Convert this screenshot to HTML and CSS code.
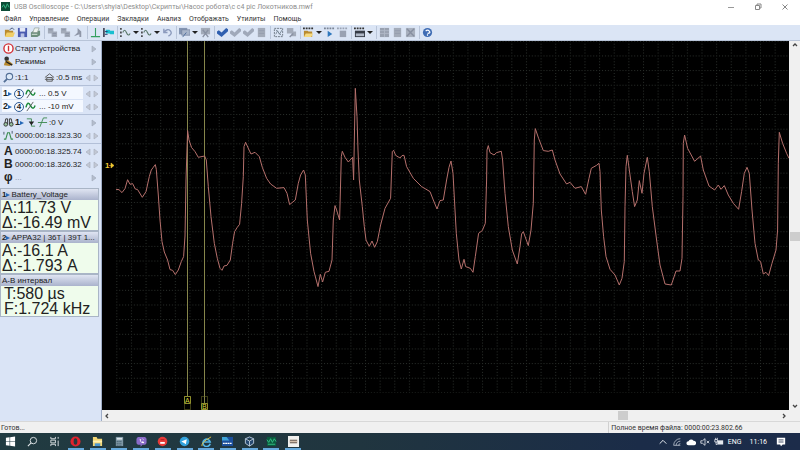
FILE: index.html
```html
<!DOCTYPE html>
<html lang="ru">
<head>
<meta charset="utf-8">
<title>USB Oscilloscope</title>
<link rel="stylesheet" href="styles.css">
</head>
<body>
<svg class="defs" aria-hidden="true">
  <symbol id="copy" viewBox="0 0 12 12"><path d="M1 1h6v6H1zM5 5h6v6H5z" fill="#a3abb9"/><path d="M2 3h4M6 7h4M6 9h4" stroke="#8a93a5"/></symbol>
  <symbol id="check" viewBox="0 0 12 12"><path d="M0 5l2-1.500 3 2.500 5-5 2 1.500v2L5 11 0 7z" fill="currentColor"/></symbol>
  <symbol id="sheet" viewBox="0 0 12 12"><path d="M2 1h8v10H2z" fill="#a3abb9"/><path d="M3 4h6M3 7h6" stroke="#959dae"/></symbol>
  <symbol id="wave" viewBox="0 0 12 12"><path d="M1 1v2M1 5v2M1 9v2" stroke="#222" stroke-width="1.5"/><path d="M3 6q2-5 4 0t4 1" fill="none" stroke="#587668" stroke-width="1.2"/></symbol>
  <symbol id="sine" viewBox="0 0 12 12"><path d="M1 7q2-8 5-2t5 0" fill="none" stroke="#1d8a3c" stroke-width="1.6"/><path d="M2 11l7-10" stroke="#555"/></symbol>
  <symbol id="spin" viewBox="0 0 14 8"><path d="M5 1v6L1 4zM9 1v6l4-3z" fill="#c2c8d4" stroke="#a6adba" stroke-width=".6"/></symbol>
  <symbol id="next" viewBox="0 0 14 8"><path d="M7 1v6l4-3z" fill="#b4bdcc" stroke="#9da7b8" stroke-width=".6"/></symbol>
  <symbol id="chan" viewBox="0 0 5 8"><path d="M0 2l4 2-4 2z" fill="#2668b8"/></symbol>
</svg>

<header class="titlebar">
  <svg class="app" viewBox="0 0 10 10"><path d="M0 0h10v10H0z" fill="#0c4c37"/><path d="M1 6l2-3 2 4 2-5 2 4" fill="none" stroke="#39c08a"/></svg>
  <h1>USB Oscilloscope - C:\Users\shyia\Desktop\Скрипты\Насос робота\с с4 pic Локотников.mwf</h1>
  <div class="winbtns">
    <button aria-label="Свернуть"><svg viewBox="0 0 8 8"><path d="M1 4.500h6" stroke="#999"/></svg></button>
    <button aria-label="Развернуть"><svg viewBox="0 0 8 8"><path d="M1.500 2.500h4v4h-4zM3 2.500V1h4v4H5.500" fill="none" stroke="#888"/></svg></button>
    <button aria-label="Закрыть"><svg viewBox="0 0 8 8"><path d="M1.500 1.500l5 5M6.500 1.500l-5 5" stroke="#888"/></svg></button>
  </div>
</header>

<nav class="menu">
  <button>Файл</button><button>Управление</button><button>Операции</button><button>Закладки</button><button>Анализ</button><button>Отображать</button><button>Утилиты</button><button>Помощь</button>
</nav>

<div class="toolbar" role="toolbar">
  <button aria-label="Открыть"><svg viewBox="0 0 12 12"><path d="M1 3h4l1 1h4v6H1z" fill="#b98b30"/><path d="M3 6h9l-2 5H1z" fill="#f1cf68"/><path d="M6 3l3-2 2 2" fill="none" stroke="#457"/></svg></button>
  <button aria-label="Сохранить"><svg viewBox="0 0 12 12"><path d="M1 1h10v10H1z" fill="#4a5bb0"/><path d="M3 1h6v4H3z" fill="#e4e9f8"/><path d="M4 7h4v4H4z" fill="#b8c2e6"/></svg></button>
  <button aria-label="Печать"><svg viewBox="0 0 12 12"><path d="M1 6l3-2h7v5l-3 2H1z" fill="#6d8f7d"/><path d="M5 1h5L8 6H3z" fill="#eef3ee" stroke="#7d8c86" stroke-width=".6"/><path d="M2 8h6" stroke="#dce8df"/></svg></button>
  <i></i>
  <button aria-label="Копировать"><svg><use href="#copy"/></svg></button>
  <button aria-label="Вставить"><svg><use href="#copy"/></svg></button>
  <button aria-label="Маркер"><svg viewBox="0 0 12 12"><path d="M5 1l4 4v6H7V8l-6 2 4-4z" fill="#8f97a8"/></svg></button>
  <i></i>
  <button aria-label="Уровень"><svg viewBox="0 0 12 12"><path d="M6 1v9M1 10.500h10" stroke="#35a060" stroke-width="1.200"/></svg></button>
  <button aria-label="Каналы"><svg viewBox="0 0 12 12"><path d="M1 1v10" stroke="#223" stroke-width="1.500"/><path d="M3 3h4l1 1h4v4H8L7 7H3z" fill="#19bfd0"/><path d="M2 5h3M2 8h3" stroke="#236"/></svg></button>
  <i></i>
  <button aria-label="Сигнал 1"><svg><use href="#wave"/></svg></button><button class="drop" aria-label="Список сигнала 1"></button>
  <button aria-label="Сигнал 2"><svg><use href="#wave"/></svg></button><button class="drop" aria-label="Список сигнала 2"></button>
  <button aria-label="Отменить"><svg viewBox="0 0 12 12"><path d="M2 2v4h4M2 6q4-5 7-2t-2 6" fill="none" stroke="#8c9bbd" stroke-width="1.500"/></svg></button>
  <i></i>
  <button aria-label="Экран"><svg viewBox="0 0 12 12"><path d="M0 1h9v7H0z" fill="#8495b2"/><path d="M3 3h9v6H3z" fill="#a8b5ca" stroke="#71809c" stroke-width=".7"/><path d="M4 11l4-5" stroke="#4d6d9c"/></svg></button><button class="drop" aria-label="Список экрана"></button>
  <button aria-label="Убрать экран"><svg viewBox="0 0 12 12"><path d="M1 1h10v7H1z" fill="#a3abb9"/><path d="M3 3l6 8M9 3l-6 8" stroke="#8a92a3" stroke-width="1.500"/></svg></button>
  <i></i>
  <button class="blue" aria-label="Принять"><svg><use href="#check"/></svg></button>
  <button class="grey" aria-label="Принять далее"><svg><use href="#check"/></svg></button>
  <button class="grey" aria-label="Принять всё"><svg><use href="#check"/></svg></button>
  <button aria-label="Лист"><svg><use href="#sheet"/></svg></button>
  <i></i>
  <button aria-label="Масштаб"><svg viewBox="0 0 12 12"><path d="M1.500 1.500h9v9h-9z" fill="none" stroke="#68737f" stroke-dasharray="2 1"/><path d="M3 8l2-4 2 4 3-5M3 3l6 6" fill="none" stroke="#7c8a98"/></svg></button>
  <button aria-label="Фрагмент"><svg viewBox="0 0 12 12"><path d="M1 1h7v6H1zM6 5h5v5H6z" fill="#a3abb9"/><path d="M4 11l4-4" stroke="#8a92a3" stroke-width="1.500"/></svg></button>
  <i></i>
  <button aria-label="Открыть запись"><svg viewBox="0 0 12 12"><path d="M0 1.500h12" stroke="#333" stroke-width="2" stroke-dasharray="2 1"/><path d="M1 4h4l1 1h4v6H1z" fill="#b98b30"/><path d="M3 7h8l-2 4H1z" fill="#f6da80"/></svg></button><button class="drop" aria-label="Список записей"></button>
  <button aria-label="Пуск записи"><svg viewBox="0 0 12 12"><path d="M0 1.500h12" stroke="#7a8495" stroke-width="2" stroke-dasharray="2 1"/><path d="M4 4l5 3.500L4 11z" fill="#2f78bd"/></svg></button>
  <button aria-label="Стоп записи"><svg viewBox="0 0 12 12"><path d="M0 1.500h12" stroke="#9aa3b4" stroke-width="2" stroke-dasharray="2 1"/><path d="M3 4h7v7H3z" fill="#9aa2b2"/></svg></button>
  <i></i>
  <button aria-label="Панель"><svg viewBox="0 0 12 12"><path d="M0 1.500h12" stroke="#333" stroke-width="2" stroke-dasharray="2 1"/><path d="M1 4h11v7H1z" fill="#353b46"/><path d="M2 7h9v3H2z" fill="#aeb7c6"/></svg></button><button class="drop" aria-label="Список панелей"></button>
  <i></i>
  <button aria-label="Таблица"><svg viewBox="0 0 12 12"><path d="M1 1h10v10H1z" fill="#99a1b0"/><path d="M1 4h10M1 7h10M6 1v10" stroke="#b0b8c6"/></svg></button>
  <button aria-label="Отчёт"><svg><use href="#sheet"/></svg></button>
  <button aria-label="Удалить"><svg viewBox="0 0 12 12"><path d="M1 1h10v10H1z" fill="#a8b0be"/><path d="M2 2l8 8M10 2l-8 8" stroke="#878fa0" stroke-width="1.500"/></svg></button>
  <i></i>
  <button aria-label="Справка"><svg viewBox="0 0 12 12"><circle cx="6" cy="6" r="5" fill="#3f6cb4"/><path d="M4 4.500q2-2 4 0T6 7M6 8v1.500" fill="none" stroke="#fff" stroke-width="1.300"/></svg></button>
</div>

<main>
  <aside>
    <section>
      <button class="row"><svg class="ic" viewBox="0 0 12 12"><circle cx="6" cy="6" r="5" fill="#fff" stroke="#d22e35" stroke-width="1.500"/><path d="M6 3v6" stroke="#d22e35" stroke-width="1.500"/></svg><span>Старт устройства</span><svg class="end"><use href="#next"/></svg></button>
      <button class="row"><svg class="ic" viewBox="0 0 12 12"><circle cx="4" cy="3" r="2.500" fill="#333"/><path d="M1 10q1-6 5-5l5 4-4 2z" fill="#b6892f"/><path d="M3 6l7 4" stroke="#222" stroke-width="1.500"/></svg><span>Режимы</span><svg class="end"><use href="#next"/></svg></button>
    </section>
    <section>
      <button class="row"><svg class="ic" viewBox="0 0 12 12"><circle cx="7" cy="5" r="3.500" fill="#dce9f8" stroke="#536f96" stroke-width="1.200"/><path d="M4.500 7.500L1 11" stroke="#536f96" stroke-width="2"/></svg><span class="zoomv">:1:1</span><svg class="ic" viewBox="0 0 12 12"><path d="M1 6l5-4 5 4M3 10V6h6v4zM1 8h10" fill="none" stroke="#555"/></svg><span>:0.5 ms</span><svg class="end"><use href="#spin"/></svg></button>
    </section>
    <section>
      <button class="row lit"><b>1</b><svg class="tri"><use href="#chan"/></svg><em>1</em><svg class="ic"><use href="#sine"/></svg><span class="chv">... 0.5 V</span><svg class="end"><use href="#spin"/></svg></button>
      <button class="row lit"><b>2</b><svg class="tri"><use href="#chan"/></svg><em>4</em><svg class="ic"><use href="#sine"/></svg><span class="chv">... -10 mV</span><svg class="end"><use href="#spin"/></svg></button>
    </section>
    <section>
      <button class="row"><svg class="ic" viewBox="0 0 12 12"><path d="M2 7l1-5h2v6M10 7L9 2H7v6" fill="none" stroke="#333"/><circle cx="3" cy="8" r="2" fill="#9ac5a2" stroke="#333"/><circle cx="9" cy="8" r="2" fill="#9ac5a2" stroke="#333"/></svg><b>1</b><svg class="tri"><use href="#chan"/></svg><svg class="ic" viewBox="0 0 12 12"><path d="M2 2h5v8h4" fill="none" stroke="#3d8a50"/><path d="M4 5h6l-3 4z" fill="#222"/></svg><svg class="ic" viewBox="0 0 12 12"><path d="M3 11L7 1h4M1 6h10" fill="none" stroke="#3d8a50"/></svg><span>:0 V</span><svg class="end"><use href="#next"/></svg></button>
      <button class="row"><svg class="ic" viewBox="0 0 12 12"><path d="M1 10h2l2-7h2l2 7h2" fill="none" stroke="#3a8c50" stroke-width="1.200"/><path d="M1 2v3M10 1v3" stroke="#456"/></svg><span>0000:00:18.323.30</span><svg class="end"><use href="#spin"/></svg></button>
    </section>
    <section>
      <button class="row"><strong>A</strong><span>0000:00:18.325.74</span><svg class="end"><use href="#spin"/></svg></button>
      <button class="row"><strong>B</strong><span>0000:00:18.326.32</span><svg class="end"><use href="#spin"/></svg></button>
      <button class="row"><strong>φ</strong><span class="dim">...</span><svg class="end"><use href="#next"/></svg></button>
    </section>
    <div class="meter"><h2><b>1</b><svg class="tri"><use href="#chan"/></svg>Battery_Voltage</h2><p>A:11.73 V</p><p>Δ:-16.49 mV</p></div>
    <div class="meter"><h2><b>2</b><svg class="tri"><use href="#chan"/></svg>APPA32 | 36T | 39T 1...</h2><p>A:-16.1 A</p><p>Δ:-1.793 A</p></div>
    <div class="meter interval"><h2>A-B интервал</h2><p>T:580 µs</p><p>F:1.724 kHz</p></div>
  </aside>

  <div class="view">
    <svg class="plot" viewBox="102 41 687 369" preserveAspectRatio="none" role="img" aria-label="Осциллограмма">
      <defs>
        <pattern id="grid" x="116.300" y="40.800" width="14.630" height="14.650" patternUnits="userSpaceOnUse">
          <path d="M.5 0v14.650" stroke="#2b302c" stroke-dasharray="1 1.930"/>
          <path d="M0 .5h14.630" stroke="#2b302c" stroke-dasharray="1 1.926"/>
        </pattern>
      </defs>
      <rect x="116" y="41" width="673" height="352" fill="url(#grid)"/>
      <g class="cursor">
        <path d="M187.500 41v355M204.500 41v362"/>
        <path class="box" d="M184.500 396.500h6v13h-6zM201.500 396.500h6v13h-6z"/>
        <path class="tag" d="M184.500 396.500h6v7h-6zM201.500 403.500h6v6h-6z"/>
        <text x="185" y="403">A</text><text x="202" y="409">B</text>
      </g>
      <polyline class="trace" points="116,189.300 119,189.700 122,192.600 125,188.600 127.600,179.700 130,184.300 132.600,183.600 135.300,189 137.600,189.600 142.300,197.300 146,191.600 149.300,176.600 151.300,170 153.300,167.300 155.300,164.600 156.300,169.300 158.300,195 160,220 162,241.600 164.300,252 167.600,260 170,269.600 172.600,270.300 175.300,274.600 178.300,270 181.300,261.600 183.600,256.600 185,236 186,180 187.600,130.600 189,140 191.600,147.600 195,151.600 198.300,157.300 204.600,156 206.300,160 208.300,186.600 211,216.600 214.300,243.300 217.300,258.300 220,268.300 222,270.300 224,266 227,265.300 230.300,260 232.600,243.300 234.600,231.600 237.300,227.300 239.600,224.300 241.600,203.300 243.300,176.600 244,146.600 245.600,142.300 248.600,149 251,154 255,152.300 259.300,156.600 262.300,167.300 266.600,178.300 270.600,184 276.600,188.300 284,187.600 287,193.300 289.600,204.600 295.300,200 298.300,183.300 300.600,175 303.600,170 305.300,175 307.300,220 310.600,253.300 314,271.600 318,286.600 320.300,274.300 322.600,282 325.300,272.300 329,271.300 332,260 333.300,220 335,205.600 336.600,210 339.600,220 341.300,156.600 342.300,151.300 345,157.300 348.300,162 352.600,157.300 353.600,180 355.300,88.300 357,116.600 358,150 359.300,180 362.300,206.600 364.300,226.600 366,240 369.300,246.300 372,241 374.600,247.300 377.300,241.600 380.600,225 385,208.300 390.600,198.300 392.300,151.600 393.600,150.300 395.600,155.300 400,158 402,155.600 404,155.300 406.600,166.600 413.300,178.300 421.600,186.600 430,191.600 433.300,200 437,209 440,200.600 443.300,200 446.600,180 449,167.300 451,161 453,173.300 455,210 456.300,233.300 459,260 461.300,269 464,259.300 465.600,266.600 470.300,268.300 473,272.300 475.300,256.600 478.600,233.300 482.300,230.600 485.300,223.300 486.600,180 487,150 488.300,145.600 490,152.600 494,155 496.600,152.600 501.300,151.300 502.600,160 505,193.300 508.300,226.600 512.300,250 517.300,264 520,246.600 521.600,234 523.300,231.600 528.300,245.600 531,230 533.300,203.300 534.300,140 535.300,128.600 538.600,138.300 543.300,150.600 548.300,151.300 552.300,150 555,160 560,174 566.600,184 570,182.300 575,188.300 581.300,186.600 585.600,194.300 589,178.300 591.300,168.300 596.600,165.300 599,163.300 600,171.600 601.300,210 603.600,236.600 606,256.600 610,269.300 615,275 619.300,285 622,278.300 624.300,261.600 625,206.600 626,166.600 627.300,155.300 629.300,170 632.300,191.600 634.600,206.600 637.300,200 639.300,180.600 642,193.300 644,173.300 647.300,157.300 649.300,171.600 652.300,206.600 656.600,240 660,265 665,284 671.300,285 676,271 680,271 682,258.300 683,196.600 683.300,143.300 684.600,135 687.600,148.300 694.600,161.300 700.600,156 703.300,170 709,186 714.600,190 718.300,185 721,189.300 724.300,185.600 728.300,195 733.300,203.300 738.600,209.300 741.600,191.600 744.300,173.300 747,167.300 749.300,173.300 752,210 755,243.300 758.300,260 760.600,261.600 763.300,274 766,272.300 768.600,275.600 772,263.300 776,250 777.600,230 778.300,163.300 779.300,132.300 782.600,143.300 786.600,153.300 789,158.300"/>
      <text class="zero" x="105" y="168">1</text><path d="M109 165.500h3M111 163l3 2.500-3 2.500z" fill="#f0c832" stroke="#f0c832" stroke-width=".6"/>
    </svg>
    <div class="vscroll">
      <svg viewBox="0 0 8 8"><path d="M2 5l2-2 2 2" fill="none" stroke="#444" stroke-width="1.300"/></svg>
      <span class="thumb"></span>
      <svg viewBox="0 0 8 8"><path d="M2 3l2 2 2-2" fill="none" stroke="#444" stroke-width="1.300"/></svg>
    </div>
    <div class="hscroll">
      <svg viewBox="0 0 8 8"><path d="M5 2L3 4l2 2" fill="none" stroke="#444" stroke-width="1.300"/></svg>
      <span class="thumb"></span>
      <svg viewBox="0 0 8 8"><path d="M3 2l2 2-2 2" fill="none" stroke="#444" stroke-width="1.300"/></svg>
    </div>
  </div>
</main>

<div class="status"><span>Готов...</span><span class="total">Полное время файла: 0000:00:23.802.66</span></div>

<footer class="taskbar">
  <div class="apps">
    <button aria-label="Пуск"><svg viewBox="0 0 12 12"><path d="M1 2l4-.6v4.300H1zM5.600 1.300L11 .6v5.100H5.600zM1 6.300h4v4.300L1 10zM5.600 6.300H11v5.100l-5.400-.7z" fill="#fff"/></svg></button>
    <button aria-label="Поиск"><svg viewBox="0 0 12 12"><circle cx="7" cy="5" r="3.500" fill="none" stroke="#e3e8ea"/><path d="M4.500 7.500L1 11" stroke="#e3e8ea" stroke-width="1.200"/></svg></button>
    <button aria-label="Задачи"><svg viewBox="0 0 12 12"><path d="M2 1v2h5V1M2 11V9h5v2M2 4.500h5v3H2zM10 1v2M10 5v6" fill="none" stroke="#dfe5e7"/></svg></button>
    <button class="open" aria-label="Opera"><svg viewBox="0 0 12 12"><ellipse cx="6" cy="6" rx="5.500" ry="5.500" fill="#e0232e"/><ellipse cx="6" cy="6" rx="2" ry="3.500" fill="#26383f"/></svg></button>
    <button class="open" aria-label="Проводник"><svg viewBox="0 0 12 12"><path d="M1 1h4l1 2h5v8H1z" fill="#f3d674"/><path d="M1 5h10v2H1z" fill="#fff0b3"/><path d="M3 8h6v3H3z" fill="#4b96cf"/></svg></button>
    <button class="open" aria-label="Калькулятор"><svg viewBox="0 0 12 12"><path d="M2 1h8v10H2z" fill="#7e96a4"/><path d="M3 2h6v2H3z" fill="#d9e3e8"/><path d="M3 6h6M3 8h6M3 10h6" stroke="#33515f" stroke-dasharray="1 1"/></svg></button>
    <button class="open" aria-label="Viber"><svg viewBox="0 0 12 12"><path d="M2 1h8l1.500 2v5L10 9.500H7L5 12V9.500H2L.5 8V3z" fill="#8a6bc8"/><path d="M4 3q0 4 4 5l1-1-1.500-1.200L6 6.500 5 5l.8-1zM6.500 2.500q2 .5 2 2.500" fill="#fff"/></svg></button>
    <button class="open" aria-label="Запись"><svg viewBox="0 0 12 12"><circle cx="6" cy="6" r="5.200" fill="#e63a38"/><path d="M3.500 6.500h5v2h-5z" fill="#fff"/><path d="M4 4h4" stroke="#a81e22"/></svg></button>
    <button class="open" aria-label="Telegram"><svg viewBox="0 0 12 12"><circle cx="6" cy="6" r="5.200" fill="#32a2dc"/><path d="M2.500 6l6-2.500-1 5.500-2-1.500z" fill="#fff"/></svg></button>
    <button class="open" aria-label="Internet Explorer"><svg viewBox="0 0 12 12"><path d="M10 8.500A4 4 0 1110 6.500H3" fill="none" stroke="#54b7e8" stroke-width="1.800"/><path d="M1 11Q0 7 11 1" fill="none" stroke="#e8c43c"/></svg></button>
    <button class="open" aria-label="Диагностика"><svg viewBox="0 0 12 12"><path d="M0 1h12v10H0z" fill="#1c4f9c"/><path d="M0 1h5l3 4H0z" fill="#3fa4d8"/><path d="M1 8h10" stroke="#fff" stroke-width="1.500" stroke-dasharray="2 .5"/></svg></button>
    <button class="open" aria-label="VirtualBox"><svg viewBox="0 0 12 12"><path d="M6 1l4.500 2v5L6 11 1.500 8V3zM1.500 3L6 5.500 10.500 3M6 5.500V11" fill="#284a70" stroke="#b9cbdc"/></svg></button>
    <button class="open" aria-label="Осциллограф"><svg viewBox="0 0 12 12"><path d="M1 1h10v10H1z" fill="#0b5a3e"/><path d="M1 4l2 3 2-4 2 4 2-4 2 3M2 9h8" fill="none" stroke="#35c184"/></svg></button>
    <button class="open" aria-label="Устройство"><svg viewBox="0 0 12 12"><path d="M0 0h12v12H0z" fill="#f0f0ee"/><path d="M2 4h8v4H2z" fill="#84766c"/><path d="M2 6h8" stroke="#d9c5b0"/></svg></button>
  </div>
  <div class="tray">
    <svg viewBox="0 0 12 12"><path d="M2 8l4-4 4 4" fill="none" stroke="#e4e8ee" stroke-width="1.200"/></svg>
    <svg viewBox="0 0 12 12"><path d="M2 10A8 8 0 0110 2M5 10a5 5 0 015-5M8 10a2 2 0 012-2M2 10h8" fill="none" stroke="#b5bdca"/></svg>
    <svg viewBox="0 0 12 12"><path d="M3 10a2.500 2.500 0 010-5 3.500 3.500 0 016-.5A2.800 2.800 0 0110 10z" fill="#fff"/></svg>
    <svg viewBox="0 0 12 12"><path d="M1 4.500h2L6 2v8L3 7.500H1zM8 4.500l3 3M11 4.500l-3 3" fill="none" stroke="#e4e8ee"/></svg>
    <svg viewBox="0 0 12 12"><path d="M4 4h7v5H4z" fill="#e4e8ee"/><path d="M1 3h3v3H1zM2.500 6v3H4M2 1v2M4 1v2" fill="none" stroke="#e4e8ee"/></svg>
    <span class="lang">ENG</span>
    <span class="clock">11:16</span>
    <svg viewBox="0 0 12 12"><path d="M1 1h10v8H8l-2 2-1-2H1z" fill="#fff"/><path d="M3 3.500h6M3 6h6" stroke="#25344f"/></svg>
  </div>
</footer>
</body>
</html>
```
FILE: styles.css
```css
* { box-sizing: border-box; }

body {
  margin: 0;
  height: 100vh;
  display: flex;
  flex-direction: column;
  overflow: hidden;
  background: #f0f0f0;
  color: #333;
  font: 7px/10px Roboto, "Noto Sans", sans-serif;
}

button {
  border: 0;
  padding: 0;
  margin: 0;
  background: none;
  color: inherit;
  font: inherit;
}

svg { display: block; flex: none; }
.defs { display: none; }

h1, h2, p { margin: 0; font-weight: 400; }

/* Title and menu */
.titlebar {
  display: flex;
  align-items: center;
  height: 13px;
  padding: 0 11px 0 1px;
  background: #fff;
  color: #8c8c8c;
}
.titlebar .app { width: 9px; height: 9px; }
.titlebar h1 { flex: 1; margin-left: 4px; font-size: 7px; white-space: nowrap; }
.winbtns { display: flex; gap: 19px; }
.winbtns svg { width: 8px; height: 8px; }

.menu {
  display: flex;
  gap: 8px;
  height: 12px;
  padding: 1px 4px;
  background: #fff;
}

/* Toolbar */
.toolbar {
  display: flex;
  align-items: center;
  height: 16px;
  padding: 0 3px;
  background: #dbe5f5;
  border-bottom: 1px solid #b8c4d8;
}
.toolbar button { width: 13px; flex: none; display: flex; justify-content: center; }
.toolbar svg { width: 11px; height: 11px; }
.toolbar i { flex: none; width: 4px; height: 13px; background: linear-gradient(#b9c5d9, #b9c5d9) center / 1px 100% no-repeat; }
.toolbar .drop { width: 8px; }
.toolbar .drop::after {
  content: "";
  border: 3px solid transparent;
  border-top-color: #222;
  border-bottom: 0;
}
.toolbar .blue { color: #2f5fb0; }
.toolbar .grey { color: #a0a9ba; }

/* Body */
main { flex: 1; min-height: 0; display: flex; }

aside {
  flex: none;
  width: 102px;
  background: #dae4f6;
  border-right: 1px solid #9fadc6;
  color: #222;
  font: 8px/13px "Liberation Sans", Arial, sans-serif;
}
aside section { padding: 1px 2px; border-bottom: 1px solid #b3c0d8; }
aside section:last-of-type { border-bottom: 0; margin-bottom: 3px; }
.row {
  display: flex;
  align-items: center;
  width: 100%;
  height: 13px;
  padding-left: 1px;
  white-space: nowrap;
}
.row .ic { width: 11px; height: 11px; margin-right: 1px; }
.row .end { width: 14px; height: 8px; margin-left: auto; }
.row b { font-size: 9px; }
.tri { width: 5px; height: 8px; }
.row em {
  width: 10px;
  height: 10px;
  margin: 0 1px;
  border: 1px solid #2f5b94;
  border-radius: 50%;
  font: bold 8px/8px "Liberation Sans", Arial, sans-serif;
  text-align: center;
}
.row strong { width: 12px; font-size: 12px; text-align: left; padding-left: 1px; }
.row .zoomv { width: 29px; text-align: left; }
.row .chv { padding-left: 2px; }
.dim { color: #8893a8; }
.lit { background: linear-gradient(#f4f8ff, #f4f8ff) 0 0 / 81px 12px no-repeat; }

.meter {
  margin: 0 2px 0 0;
  border: 1px solid #a9b5c6;
  background: #effcec;
}
.meter h2 {
  display: flex;
  align-items: center;
  height: 11px;
  padding-left: 1px;
  background: linear-gradient(#dfe4f2, #aab3cc);
  font-size: 8px;
  line-height: 11px;
  white-space: nowrap;
  overflow: hidden;
}
.meter p { padding-left: 1px; font-size: 16px; line-height: 15px; height: 15px; white-space: nowrap; }
.interval p { padding-left: 3px; }

.view {
  flex: 1;
  min-width: 0;
  display: grid;
  grid-template: minmax(0, 1fr) 11px / minmax(0, 1fr) 11px;
}
.plot { width: 100%; height: 100%; background: #000; }
.trace { fill: none; stroke: #b5706c; stroke-width: 1; }
.cursor path { fill: none; stroke: #85854a; }
.cursor .box { stroke: #77772c; stroke-dasharray: 1 1; }
.cursor .tag { stroke: #8f8f2c; }
.cursor text { fill: #d4d43a; font: 7px "Liberation Sans", sans-serif; }
.zero { fill: #f0c832; font: bold 8px "Liberation Sans", sans-serif; }

.vscroll, .hscroll { display: flex; align-items: center; justify-content: space-between; background: #f0f0f0; }
.vscroll { flex-direction: column; }
.hscroll { padding: 0 1px; }
.vscroll svg, .hscroll svg { width: 8px; height: 8px; }
.thumb { width: 10px; height: 9px; background: #cdcdcd; }
.vscroll .thumb { margin-top: 22px; }
.hscroll .thumb { margin-left: 354px; }

/* Status line */
.status {
  display: flex;
  justify-content: space-between;
  height: 12px;
  padding-left: 1px;
  border-top: 1px solid #d8d8d8;
  line-height: 12px;
}
.total { width: 24%; border-left: 1px solid #d0d0d0; padding-left: 2px; white-space: nowrap; }

/* Taskbar */
.taskbar {
  display: flex;
  justify-content: space-between;
  height: 17px;
  background: linear-gradient(90deg, #213b41, #20353f 45%, #1b2c48 80%, #1c2c4a);
  color: #fff;
}
.apps { width: 38%; display: grid; grid-template-columns: repeat(14, 1fr); }
.apps button { display: flex; justify-content: center; padding-top: 3px; }
.apps svg { width: 11px; height: 11px; }
.apps .open { background: linear-gradient(#66a9dc, #66a9dc) bottom / 16px 2px no-repeat; }
.tray { display: flex; align-items: center; gap: 4px; padding-right: 14px; }
.tray svg { width: 10px; height: 10px; }
.tray .clock { margin: 0 5px 0 4px; }
```
